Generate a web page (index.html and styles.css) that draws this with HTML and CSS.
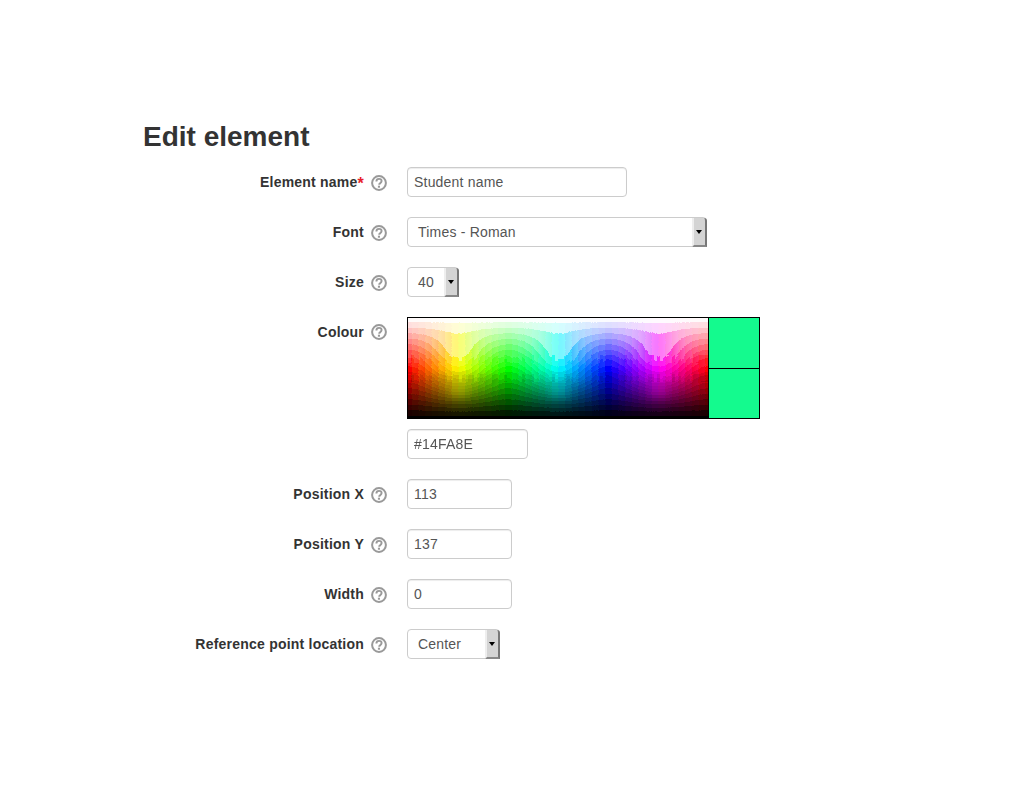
FILE: index.html
```html
<!DOCTYPE html>
<html lang="en">
  <head>
    <meta charset="UTF-8" />
    <title>Edit element</title>
    <link rel="stylesheet" href="styles.css">
  </head>
  <body>
    <svg class="defs" width="0" height="0">
      <symbol id="help" viewBox="0 0 16 16">
        <circle cx="8" cy="8" r="6.9" fill="none" stroke="#999" stroke-width="2" />
        <path d="M5.4 6.4c0-1.6 1.1-2.5 2.6-2.5s2.6.9 2.6 2.2c0 1.1-.7 1.6-1.3 2-.8.5-1.1.9-1.1 1.7" fill="none" stroke="#999" stroke-width="1.9" />
        <rect x="6.9" y="10.7" width="2.1" height="2" fill="#999" />
      </symbol>
    </svg>
    <main class="page">
      <h2>Edit element</h2>
      <form class="form">
        <div class="row">
          <label>Element name<span class="req">*</span></label>
          <svg class="help"><use href="#help" /></svg>
          <input class="field w-name" type="text" value="Student name">
        </div>
        <div class="row">
          <label>Font</label>
          <svg class="help"><use href="#help" /></svg>
          <div class="select w-font"><span>Times - Roman</span><i class="arrow"></i></div>
        </div>
        <div class="row">
          <label>Size</label>
          <svg class="help"><use href="#help" /></svg>
          <div class="select w-size"><span>40</span><i class="arrow"></i></div>
        </div>
        <div class="row colour">
          <label>Colour</label>
          <svg class="help"><use href="#help" /></svg>
          <div class="picker">
            <div class="picker-box">
              <canvas id="map" width="300" height="100"></canvas>
              <div class="swatches"><div class="swatch"></div><div class="swatch"></div></div>
            </div>
            <input class="field w-hex" type="text" value="#14FA8E">
          </div>
        </div>
        <div class="row">
          <label>Position X</label>
          <svg class="help"><use href="#help" /></svg>
          <input class="field w-num" type="text" value="113">
        </div>
        <div class="row">
          <label>Position Y</label>
          <svg class="help"><use href="#help" /></svg>
          <input class="field w-num" type="text" value="137">
        </div>
        <div class="row">
          <label>Width</label>
          <svg class="help"><use href="#help" /></svg>
          <input class="field w-num" type="text" value="0">
        </div>
        <div class="row">
          <label>Reference point location</label>
          <svg class="help"><use href="#help" /></svg>
          <div class="select w-ref"><span>Center</span><i class="arrow"></i></div>
        </div>
      </form>
    </main>
    <script src="picker.js"></script>
  </body>
</html>
```

FILE: styles.css
```css
body {
  margin: 0;
  background-color: white;
  color: #333;
  font-family: "Liberation Sans", Arial, sans-serif;
  font-size: 14px;
}
.defs {
  position: absolute;
}
.page {
  padding: 120px 0 0 143px;
}
h2 {
  margin: 0 0 13px;
  font-size: 28px;
  line-height: 34px;
  font-weight: bold;
  color: #333;
}
.form {
  display: flex;
  flex-direction: column;
  gap: 20px;
}
.row {
  display: flex;
  align-items: center;
  height: 30px;
}
.row.colour {
  height: auto;
  align-items: flex-start;
}
.row.colour .help {
  margin-top: 7px;
}
label {
  width: 221px;
  text-align: right;
  font-weight: bold;
  line-height: 30px;
  letter-spacing: 0.22px;
  white-space: nowrap;
}
.req {
  color: #e8202a;
  font-size: 16px;
  line-height: 0;
  vertical-align: -2px;
}
.help {
  width: 16px;
  height: 16px;
  margin: 1px 20px 0 7px;
}
.field {
  box-sizing: border-box;
  height: 30px;
  margin: 0;
  padding: 0 6px;
  border: 1px solid #ccc;
  border-radius: 4px;
  box-shadow: inset 0 1px 1px rgba(0, 0, 0, 0.075);
  color: #555;
  font-family: inherit;
  font-size: 14px;
  letter-spacing: 0.2px;
}
.w-name {
  width: 220px;
}
.w-hex {
  width: 121px;
}
.w-num {
  width: 105px;
}
.select {
  box-sizing: border-box;
  display: flex;
  align-items: center;
  justify-content: space-between;
  height: 30px;
  padding-left: 10px;
  border: 1px solid #ccc;
  border-radius: 4px;
  color: #555;
  letter-spacing: 0.2px;
}
.w-font {
  width: 300px;
}
.w-size {
  width: 52px;
}
.w-ref {
  width: 93px;
}
.arrow {
  position: relative;
  box-sizing: border-box;
  width: 15px;
  height: 29px;
  margin: 0 -1px -1px 0;
  background-color: #d4d4d4;
  border-right: 2px solid #777;
  border-bottom: 2px solid #888;
  border-left: 2px solid #eee;
  border-radius: 0 3px 0 0;
}
.arrow::after {
  content: "";
  position: absolute;
  top: 12px;
  left: 2px;
  border-top: 4px solid black;
  border-left: 3px solid transparent;
  border-right: 3px solid transparent;
}
.picker {
  display: flex;
  flex-direction: column;
  gap: 10px;
}
.picker-box {
  display: flex;
  width: 353px;
  height: 102px;
  box-sizing: border-box;
  border: 1px solid black;
}
#map {
  display: block;
  width: 300px;
  height: 100px;
}
.swatches {
  flex: 1;
  display: flex;
  flex-direction: column;
  border-left: 1px solid black;
}
.swatch {
  flex: 1;
  background-color: #14fa8e;
}
.swatch + .swatch {
  border-top: 1px solid black;
}
```

FILE: picker.js
```js
// colour map: hue across, lightness down
// bands dip at yellow, cyan and magenta and rise at red, green and blue, like a reduced palette
const map = document.getElementById("map");
const ctx = map.getContext("2d");
const img = ctx.createImageData(300, 100);
const BAND = 0.055;
const DIP = 0.28;
const HUE_STEP = 8;

function channel(h, l, n) {
  const k = (n + h / 30) % 12;
  const a = Math.min(l, 1 - l);
  return l - a * Math.max(-1, Math.min(k - 3, 9 - k, 1));
}

function dip(h) {
  const f = 1 - Math.abs(((h / 60) % 2) - 1);
  return 0.5 - 0.5 * Math.cos(Math.PI * f);
}

// flat near white and black, strongest in the middle
function bend(l) {
  const s = Math.sin(Math.PI * l);
  return s * s;
}

let seed = 7;
function noise() {
  seed = (seed * 16807) % 2147483647;
  return seed / 2147483647 - 0.5;
}

// rough edges where the bands break, around 40% and 60% down
const jitter = [];
for (let x = 0; x < 300; x++) {
  jitter[x] = x % 3 === 0 ? noise() * 6 : jitter[x - 1];
}

for (let y = 0; y < 100; y++) {
  for (let x = 0; x < 300; x++) {
    const rough = (y > 36 && y < 45) || (y > 55 && y < 64) ? jitter[x] : 0;
    const l = 1 - (y + rough) / 100;
    const h = (x / 300) * 360;
    const d = dip(h);
    const t = l + DIP * d * bend(l);
    const band = Math.round(t / BAND + noise() * 0.08) * BAND;
    // back to a lightness for that band
    let lq = band;
    for (let n = 0; n < 8; n++) {
      lq = band - DIP * d * bend(lq);
    }
    lq = Math.max(0, Math.min(1, lq));
    const hq = Math.round((h + noise() * 1.5) / HUE_STEP) * HUE_STEP;
    const i = (y * 300 + x) * 4;
    img.data[i] = channel(hq, lq, 0) * 255;
    img.data[i + 1] = channel(hq, lq, 8) * 255;
    img.data[i + 2] = channel(hq, lq, 4) * 255;
    img.data[i + 3] = 255;
  }
}
ctx.putImageData(img, 0, 0);
```
